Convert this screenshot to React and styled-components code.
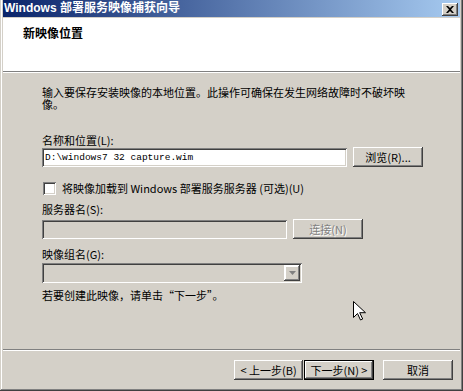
import styled, { createGlobalStyle } from "styled-components";

const GlobalStyle = createGlobalStyle`
  html, body {
    margin: 0;
    padding: 0;
    background: #d4d0c8;
  }
  body {
    font-family: "Noto Sans CJK SC", "Liberation Sans", sans-serif;
    font-size: 11px;
    color: #000;
  }
`;

const raised = "inset -1px -1px #404040, inset 1px 1px #ffffff, inset -2px -2px #808080";
const sunken = "inset 1px 1px #808080, inset -1px -1px #ffffff, inset 2px 2px #404040, inset -2px -2px #d4d0c8";

const Window = styled.div`
    position: relative;
    width: 463px;
    height: 391px;
    box-sizing: border-box;
    padding: 0 3px 3px 3px;
    background: #d4d0c8;
    box-shadow: inset -1px -1px #404040, inset 1px 0 #d4d0c8, inset -2px -2px #808080, inset 2px 0 #ffffff;
    display: flex;
    flex-direction: column;
    overflow: hidden;
`;

const TitleBar = styled.div`
    height: 17px;
    margin-bottom: 1px;
    padding: 0 2px 0 1px;
    display: flex;
    align-items: center;
    justify-content: space-between;
    background: linear-gradient(to right, #0a246a, #a6caf0);
`;
const TitleText = styled.span`
    color: #fff;
    font-family: "Liberation Sans", "Noto Sans CJK SC", sans-serif;
    font-weight: bold;
    font-size: 12px;
    line-height: 17px;
    white-space: nowrap;
`;
const CloseBtn = styled.div`
    width: 16px;
    height: 13px;
    margin-top: 2px;
    background: #d4d0c8;
    box-shadow: ${raised};
    display: flex;
    align-items: center;
    justify-content: center;
`;

const Header = styled.div`
    height: 53px;
    background: #fff;
    box-sizing: border-box;
    padding: 8px 0 0 20px;
`;
const HeaderTitle = styled.div`
    font-weight: bold;
    font-size: 12px;
    line-height: 14px;
`;

const Divider = styled.div`
    height: 0;
    border-top: 1px solid #808080;
    border-bottom: 1px solid #ffffff;
`;

const Body = styled.div`
    height: 276px;
    box-sizing: border-box;
    padding: 0 0 0 39px;
    display: flex;
    flex-direction: column;
`;

const Text = styled.div`
    line-height: 12px;
    margin-top: ${p => p.$mt || 0}px;
    width: ${p => (p.$w ? p.$w + "px" : "auto")};
    white-space: ${p => (p.$w ? "normal" : "nowrap")};
`;

const Row = styled.div`
    display: flex;
    align-items: flex-start;
    gap: ${p => p.$gap || 6}px;
    margin-top: ${p => p.$mt || 0}px;
`;

const Field = styled.div`
    width: ${p => p.$w}px;
    height: 19px;
    margin-top: 1px;
    box-sizing: border-box;
    padding: 0 3px;
    background: ${p => (p.$disabled ? "#d4d0c8" : "#fff")};
    box-shadow: ${sunken};
    font-family: "Liberation Mono", "Noto Sans CJK SC", monospace;
    font-size: 9.5px;
    line-height: 19px;
    white-space: nowrap;
`;

const Combo = styled.div`
    width: ${p => p.$w}px;
    height: 20px;
    box-sizing: border-box;
    padding: 2px;
    background: #d4d0c8;
    box-shadow: ${sunken};
    display: flex;
    justify-content: flex-end;
`;
const ComboArrow = styled.div`
    width: 16px;
    height: 16px;
    background: #d4d0c8;
    box-shadow: ${raised}, inset 2px 2px #ffffff;
    display: flex;
    align-items: center;
    justify-content: center;
`;

const Button = styled.button`
    width: ${p => p.$w || 70}px;
    height: 20px;
    padding: 0;
    border: none;
    background: #d4d0c8;
    font-family: "Noto Sans CJK SC", "Liberation Sans", sans-serif;
    font-size: 11px;
    line-height: 20px;
    white-space: nowrap;
    color: ${p => (p.disabled ? "#808080" : "#000")};
    text-shadow: ${p => (p.disabled ? "1px 1px #ffffff" : "none")};
    box-shadow: ${p =>
        p.$default
            ? "inset 0 0 0 1px #000, inset -2px -2px #404040, inset 2px 2px #ffffff, inset -3px -3px #808080"
            : raised + ", inset 1px 1px #ffffff"};
`;

const CheckRow = styled.label`
    display: flex;
    align-items: center;
    gap: 6px;
    margin-top: 15px;
    line-height: 13px;
    white-space: nowrap;
`;
const CheckBox = styled.span`
    width: 13px;
    height: 13px;
    margin-left: 1px;
    background: #fff;
    box-shadow: ${sunken};
`;

const Footer = styled.div`
    flex: 1;
    display: flex;
    justify-content: flex-end;
    align-items: flex-start;
    padding: 9px 7px 0 0;
`;
const NavGroup = styled.div`
    display: flex;
    gap: 1px;
    margin-right: 9px;
`;

const Cursor = styled.svg`
    position: absolute;
    left: 353px;
    top: 301px;
`;

export default function App() {
    return (
        <>
            <GlobalStyle />
            <Window>
                <TitleBar>
                    <TitleText>Windows 部署服务映像捕获向导</TitleText>
                    <CloseBtn>
                        <svg width="8" height="7" viewBox="0 0 8 7">
                            <path d="M0 0h2l2 2 2-2h2L5 3.5 8 7H6L4 5 2 7H0l3-3.5z" fill="#000" />
                        </svg>
                    </CloseBtn>
                </TitleBar>

                <Header>
                    <HeaderTitle>新映像位置</HeaderTitle>
                </Header>
                <Divider />

                <Body>
                    <Text $mt={13} $w={370}>
                        输入要保存安装映像的本地位置。此操作可确保在发生网络故障时不破坏映像。
                    </Text>

                    <Text $mt={24}>名称和位置(L):</Text>
                    <Row $mt={1}>
                        <Field $w={305}>D:\windows7 32 capture.wim</Field>
                        <Button>浏览(R)...</Button>
                    </Row>

                    <CheckRow>
                        <CheckBox />
                        将映像加载到 Windows 部署服务服务器 (可选)(U)
                    </CheckRow>

                    <Text $mt={8}>服务器名(S):</Text>
                    <Row $mt={4}>
                        <Field $w={245} $disabled />
                        <Button disabled>连接(N)</Button>
                    </Row>

                    <Text $mt={9}>映像组名(G):</Text>
                    <Row $mt={3}>
                        <Combo $w={260}>
                            <ComboArrow>
                                <svg width="7" height="4" viewBox="0 0 7 4">
                                    <path d="M0 0h7L3.5 4z" fill="#808080" />
                                </svg>
                            </ComboArrow>
                        </Combo>
                    </Row>

                    <Text $mt={6}>若要创建此映像，请单击“下一步”。</Text>
                </Body>

                <Divider />
                <Footer>
                    <NavGroup>
                        <Button $w={69}>&lt; 上一步(B)</Button>
                        <Button $w={70} $default>下一步(N) &gt;</Button>
                    </NavGroup>
                    <Button $w={70}>取消</Button>
                </Footer>

                <Cursor width="13" height="20" viewBox="0 0 13 20">
                    <path d="M0.5 0.5v16l4-4 3 6.5 2.2-1-3-6.3h5.8z" fill="#fff" stroke="#000" strokeWidth="1" />
                </Cursor>
            </Window>
        </>
    );
}
